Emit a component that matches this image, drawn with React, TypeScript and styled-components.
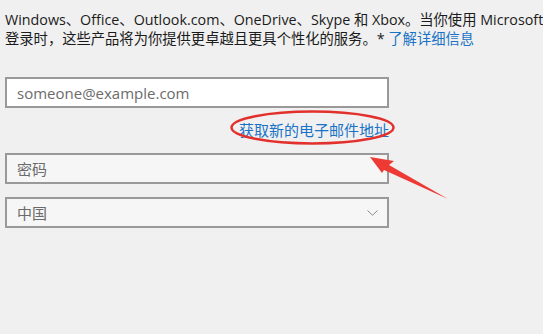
import React from 'react';
import styled, { createGlobalStyle } from 'styled-components';

const GlobalStyle = createGlobalStyle`
  html, body {
    margin: 0;
    padding: 0;
    background: #f0f0f0;
    overflow: hidden;
  }
  body {
    font-family: "Segoe UI", "Open Sans", "Noto Sans CJK SC", sans-serif;
  }
`;

const Page = styled.div`
  position: relative;
  width: 543px;
  height: 334px;
  padding: 10px 0 0 5px;
  box-sizing: border-box;
  overflow: hidden;
`;

const Intro = styled.div`
  font-size: 14.3px;
  line-height: 19px;
  color: #1b1b1b;
`;

const Line = styled.div`
  white-space: nowrap;
`;

const Link = styled.a`
  color: #1a73c6;
  text-decoration: none;
`;

const Form = styled.div`
  width: 384px;
  margin-top: 29px;
  display: flex;
  flex-direction: column;
`;

const Field = styled.div<{ $bg?: string }>`
  height: 31px;
  box-sizing: border-box;
  border: 2px solid #999;
  background: ${p => p.$bg || '#fff'};
  display: flex;
  align-items: center;
  justify-content: space-between;
  padding: 0 9px 0 10px;
  font-size: 15px;
  color: #6b6b6b;
`;

const LinkRow = styled.div`
  display: flex;
  justify-content: flex-end;
  padding-top: 12px;
  margin-bottom: 13px;
  font-size: 15px;
  line-height: 20px;
`;

const Gap = styled.div`
  height: 13px;
`;

const Chevron = () => (
  <svg width="11" height="6" viewBox="0 0 11 6">
    <path d="M0.5 0.5 L5.5 5.2 L10.5 0.5" fill="none" stroke="#888" strokeWidth="1" />
  </svg>
);

const Annotation = styled.svg`
  position: absolute;
  left: 0;
  top: 0;
  pointer-events: none;
`;

export default function App() {
  return (
    <>
      <GlobalStyle />
      <Page>
        <Intro>
          <Line>Windows、Office、Outlook.com、OneDrive、Skype 和 Xbox。当你使用 Microsoft</Line>
          <Line>
            登录时，这些产品将为你提供更卓越且更具个性化的服务。* <Link href="#">了解详细信息</Link>
          </Line>
        </Intro>
        <Form>
          <Field>someone@example.com</Field>
          <LinkRow>
            <Link href="#">获取新的电子邮件地址</Link>
          </LinkRow>
          <Field $bg="#f6f6f6">密码</Field>
          <Gap />
          <Field $bg="#f6f6f6">
            <span>中国</span>
            <Chevron />
          </Field>
        </Form>
        <Annotation width="543" height="334" viewBox="0 0 543 334">
          <ellipse cx="312.5" cy="127.5" rx="81" ry="16" fill="none" stroke="#e2312c" strokeWidth="2.5" />
          <polygon points="370,157 394,161 389,165 448,199 384,170 382,173" fill="#ee3a35" />
        </Annotation>
      </Page>
    </>
  );
}
